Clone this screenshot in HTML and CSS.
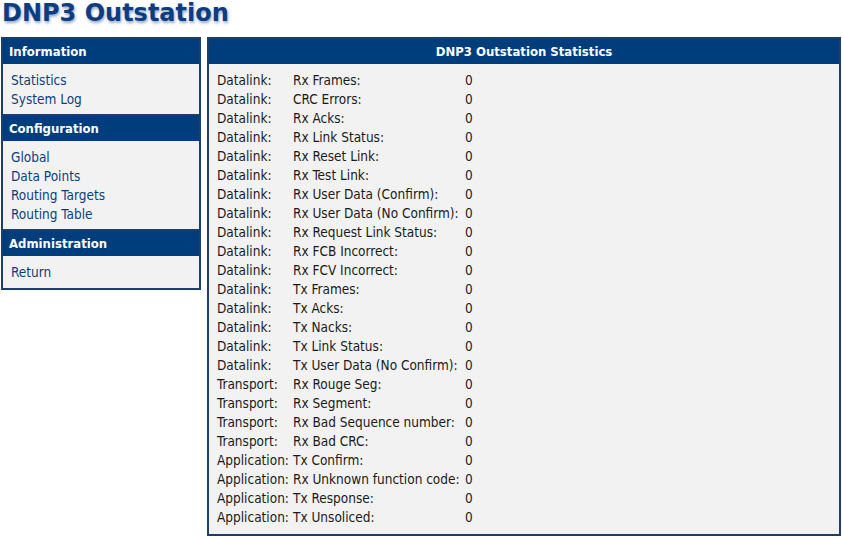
FILE: index.html
```html
<!DOCTYPE html>
<html lang="en">
<head>
<meta charset="UTF-8">
<title>DNP3 Outstation</title>
<link rel="stylesheet" href="styles.css">
</head>
<body>
<h1 class="title">DNP3 Outstation</h1>
<div class="layout">
<nav class="menu">
<div class="menu-head">Information</div>
<ul class="menu-list">
<li><a href="#">Statistics</a></li>
<li><a href="#">System Log</a></li>
</ul>
<div class="menu-head">Configuration</div>
<ul class="menu-list">
<li><a href="#">Global</a></li>
<li><a href="#">Data Points</a></li>
<li><a href="#">Routing Targets</a></li>
<li><a href="#">Routing Table</a></li>
</ul>
<div class="menu-head">Administration</div>
<ul class="menu-list">
<li><a href="#">Return</a></li>
</ul>
</nav>

<section class="panel">
<div class="panel-head">DNP3 Outstation Statistics</div>
<div class="stats">
<span>Datalink:</span><span>Rx Frames:</span><span>0</span>
<span>Datalink:</span><span>CRC Errors:</span><span>0</span>
<span>Datalink:</span><span>Rx Acks:</span><span>0</span>
<span>Datalink:</span><span>Rx Link Status:</span><span>0</span>
<span>Datalink:</span><span>Rx Reset Link:</span><span>0</span>
<span>Datalink:</span><span>Rx Test Link:</span><span>0</span>
<span>Datalink:</span><span>Rx User Data (Confirm):</span><span>0</span>
<span>Datalink:</span><span>Rx User Data (No Confirm):</span><span>0</span>
<span>Datalink:</span><span>Rx Request Link Status:</span><span>0</span>
<span>Datalink:</span><span>Rx FCB Incorrect:</span><span>0</span>
<span>Datalink:</span><span>Rx FCV Incorrect:</span><span>0</span>
<span>Datalink:</span><span>Tx Frames:</span><span>0</span>
<span>Datalink:</span><span>Tx Acks:</span><span>0</span>
<span>Datalink:</span><span>Tx Nacks:</span><span>0</span>
<span>Datalink:</span><span>Tx Link Status:</span><span>0</span>
<span>Datalink:</span><span>Tx User Data (No Confirm):</span><span>0</span>
<span>Transport:</span><span>Rx Rouge Seg:</span><span>0</span>
<span>Transport:</span><span>Rx Segment:</span><span>0</span>
<span>Transport:</span><span>Rx Bad Sequence number:</span><span>0</span>
<span>Transport:</span><span>Rx Bad CRC:</span><span>0</span>
<span>Application:</span><span>Tx Confirm:</span><span>0</span>
<span>Application:</span><span>Rx Unknown function code:</span><span>0</span>
<span>Application:</span><span>Tx Response:</span><span>0</span>
<span>Application:</span><span>Tx Unsoliced:</span><span>0</span>
</div>
</section>
</div>
</body>
</html>
```

FILE: styles.css
```css
body {
font-family: "DejaVu Sans Condensed", "DejaVu Sans", sans-serif;
font-size: 13.5px;
color: #1a1a1a;
margin: 0;
padding: 0 1px;
background-color: #fff;
}

.title {
font-family: "DejaVu Sans", sans-serif;
font-weight: bold;
font-size: 24px;
color: #0d3d80;
text-shadow: 1px 2px 3px rgba(13, 61, 128, 0.45);
margin: 0;
padding: 0 0 0 1px;
height: 37px;
line-height: 27px;
}

.layout {
display: flex;
align-items: flex-start;
gap: 6px;
}

.menu {
width: 196px;
border: 2px solid #1c3f68;
background-color: #f2f2f2;
}

.menu-head {
background-color: #003d7c;
color: #fff;
font-weight: bold;
font-size: 13px;
height: 25px;
line-height: 25px;
padding-left: 6px;
}

.menu-list {
list-style: none;
margin: 0;
padding: 7px 0 5px 8px;
border-bottom: 2px solid #1c3f68;
}

.menu-list:last-child {
border-bottom: none;
padding-bottom: 6px;
}

.menu-list li {
line-height: 19px;
}

.menu-list a {
color: #0c3f7a;
text-decoration: none;
}

.panel {
flex: 1;
border: 2px solid #1c3f68;
background-color: #f2f2f2;
}

.panel-head {
background-color: #003d7c;
color: #fff;
font-weight: bold;
font-size: 13px;
text-align: center;
height: 25px;
line-height: 25px;
}

.stats {
display: grid;
grid-template-columns: 76px 172px auto;
line-height: 19px;
padding: 7px 0 7px 8px;
}
```
